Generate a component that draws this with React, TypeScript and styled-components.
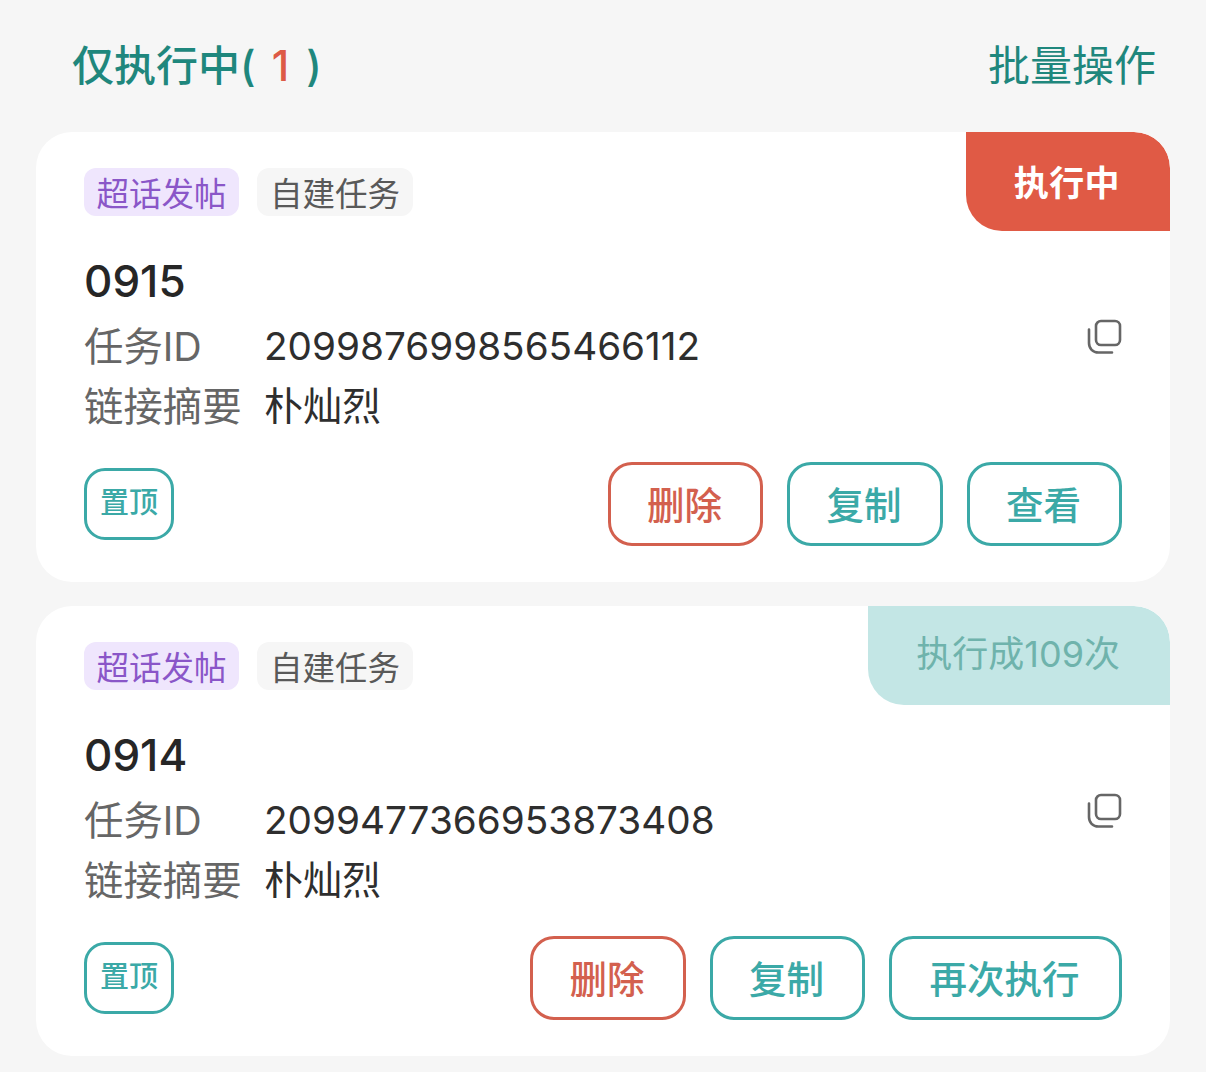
import React from "react";
import styled, { createGlobalStyle } from "styled-components";

const CJK = `Inter, "Noto Sans CJK SC", sans-serif`;

const Global = createGlobalStyle`
  html, body { margin: 0; padding: 0; background: #f6f6f6; }
  body { font-family: ${CJK}; overflow: hidden; }
`;

const Page = styled.div`
  width: 1206px;
  height: 1072px;
  box-sizing: border-box;
  padding: 0 36px;
  overflow: hidden;
`;

const Header = styled.header`
  height: 132px;
  box-sizing: border-box;
  padding: 0 14px 0 36px;
  display: flex;
  align-items: center;
  justify-content: space-between;
  color: #1f877d;
  font-size: 42px;
  line-height: 1;
`;

const HeaderTitle = styled.div`
  display: flex;
  align-items: center;
  white-space: pre;
  font-weight: 500;
`;

const Count = styled.span`
  margin: 0 6px 0 5px;
  color: #dd5a46;
`;

const CardList = styled.div`
  display: flex;
  flex-direction: column;
  gap: 24px;
`;

const CardBox = styled.section`
  position: relative;
  height: 450px;
  box-sizing: border-box;
  padding: 36px 48px 0;
  border-radius: 36px;
  background: #fff;
  overflow: hidden;
`;

const Status = styled.div<{ $done?: boolean }>`
  position: absolute;
  top: 0;
  right: 0;
  height: 99px;
  box-sizing: border-box;
  padding: 0 50px ${(p) => (p.$done ? 9 : 2)}px 48px;
  display: flex;
  align-items: center;
  border-radius: 0 36px 0 36px;
  font-size: ${(p) => (p.$done ? 36 : 35)}px;
  letter-spacing: ${(p) => (p.$done ? 0 : 0.4)}px;
  font-weight: ${(p) => (p.$done ? 400 : 700)};
  color: ${(p) => (p.$done ? "#6fb3ac" : "#fff")};
  background: ${(p) => (p.$done ? "#c3e6e5" : "#e05a45")};
`;

const Tags = styled.div`
  display: flex;
  gap: 18px;
`;

const Tag = styled.span<{ $purple?: boolean }>`
  height: 48px;
  width: ${(p) => (p.$purple ? 155 : 156)}px;
  box-sizing: border-box;
  padding-bottom: 2px;
  display: flex;
  align-items: center;
  justify-content: center;
  border-radius: 12px;
  font-size: 32.5px;
  color: ${(p) => (p.$purple ? "#8a56c8" : "#595959")};
  background: ${(p) => (p.$purple ? "#efe6fd" : "#f6f6f6")};
`;

const Title = styled.h2`
  margin: 37px 0 0;
  height: 56px;
  font-size: 44px;
  line-height: 56px;
  font-weight: 500;
  color: #262626;
`;

const InfoRow = styled.div`
  height: 60px;
  display: flex;
  align-items: center;
  font-size: 39px;
  color: #2e2e2e;
`;

const InfoRowFirst = styled(InfoRow)`
  margin-top: 4px;
`;

const Label = styled.span`
  width: 180px;
  flex: none;
  font-size: 39.4px;
  color: #666;
`;

const IdValue = styled.span`
  padding-top: 6px;
  font-size: 38.7px;
`;

const CopyIcon = styled.svg`
  margin-left: auto;
  margin-top: -12px;
  width: 36px;
  height: 36px;
  flex: none;
`;

const Footer = styled.div`
  margin-top: 29px;
  display: flex;
  align-items: center;
  gap: 24px;
`;

const PinButton = styled.button`
  width: 90px;
  height: 72px;
  margin-right: auto;
  padding: 0 0 8px;
  box-sizing: border-box;
  border: 3px solid #3ba9a7;
  border-radius: 21px;
  background: #fff;
  color: #3ba9a7;
  font: 500 29px ${CJK};
`;

const ActionButton = styled.button<{ $danger?: boolean; $w: number }>`
  width: ${(p) => p.$w}px;
  height: 84px;
  padding: 0 2px 4px 0;
  box-sizing: border-box;
  border: 3px solid ${(p) => (p.$danger ? "#d3604e" : "#3ba9a7")};
  border-radius: 24px;
  background: #fff;
  color: ${(p) => (p.$danger ? "#d3604e" : "#3ba9a7")};
  font: 500 37.5px ${CJK};
`;

const Copy = () => (
  <CopyIcon viewBox="0 0 36 36" fill="none" stroke="#666" strokeWidth="2.6" strokeLinecap="round">
    <rect x="10" y="2" width="24" height="24" rx="5" />
    <path d="M3 10.5V24c0 5.5 3.8 9.5 9.5 9.5H26" />
  </CopyIcon>
);

type Props = {
  status: string;
  done?: boolean;
  name: string;
  id: string;
  actions: { label: string; w: number; danger?: boolean }[];
};

const Card = ({ status, done, name, id, actions }: Props) => (
  <CardBox>
    <Status $done={done}>{status}</Status>
    <Tags>
      <Tag $purple>超话发帖</Tag>
      <Tag>自建任务</Tag>
    </Tags>
    <Title>{name}</Title>
    <InfoRowFirst>
      <Label>任务ID</Label>
      <IdValue>{id}</IdValue>
      <Copy />
    </InfoRowFirst>
    <InfoRow>
      <Label>链接摘要</Label>
      <span>朴灿烈</span>
    </InfoRow>
    <Footer>
      <PinButton>置顶</PinButton>
      {actions.map((a) => (
        <ActionButton key={a.label} $danger={a.danger} $w={a.w}>
          {a.label}
        </ActionButton>
      ))}
    </Footer>
  </CardBox>
);

export default function App() {
  return (
    <Page>
      <Global />
      <Header>
        <HeaderTitle>
          仅执行中( <Count>1</Count> )
        </HeaderTitle>
        <span>批量操作</span>
      </Header>
      <CardList>
        <Card
          status="执行中"
          name="0915"
          id="2099876998565466112"
          actions={[
            { label: "删除", w: 155, danger: true },
            { label: "复制", w: 156 },
            { label: "查看", w: 155 },
          ]}
        />
        <Card
          status="执行成109次"
          done
          name="0914"
          id="2099477366953873408"
          actions={[
            { label: "删除", w: 156, danger: true },
            { label: "复制", w: 155 },
            { label: "再次执行", w: 233 },
          ]}
        />
      </CardList>
    </Page>
  );
}
